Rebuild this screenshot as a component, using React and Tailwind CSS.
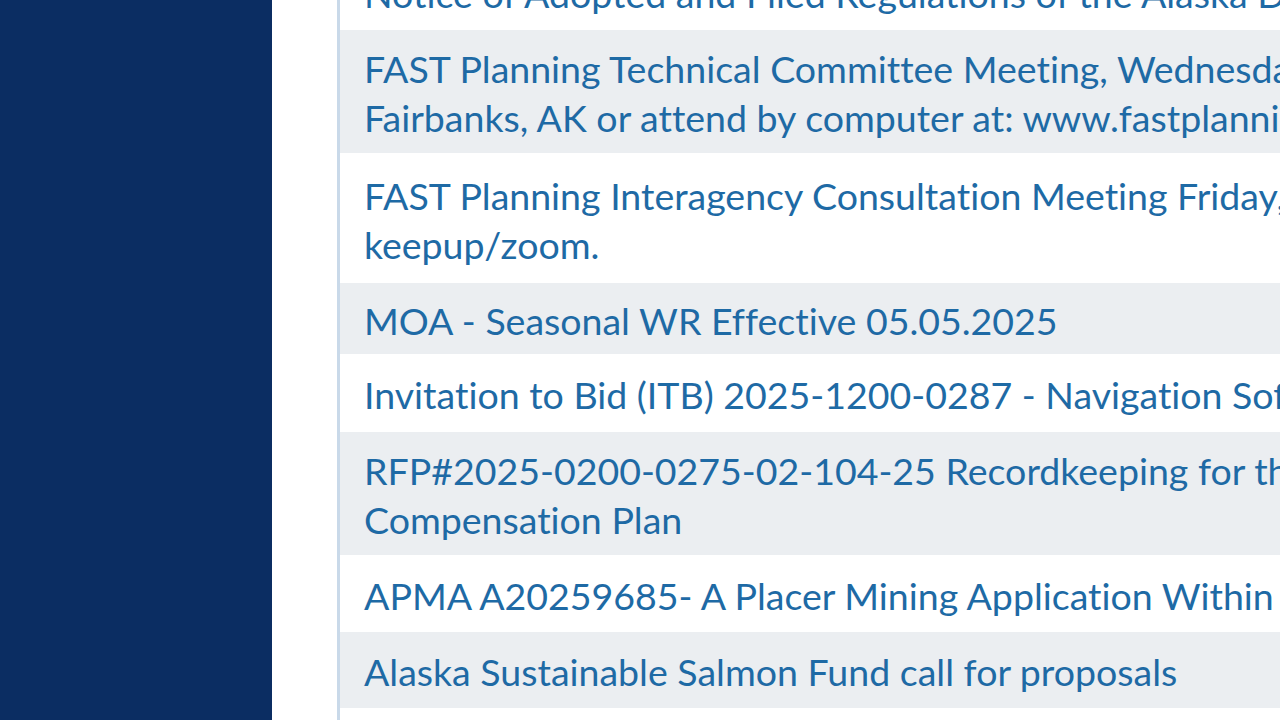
const rows = [
  { h: "h-[76px]", lines: ["Notice of Adopted and Filed Regulations of the Alaska Department of Fish and Game"] },
  {
    h: "h-[123px]",
    lines: [
      "FAST Planning Technical Committee Meeting, Wednesday, May 7, 2025, 10:00 a.m.",
      "Fairbanks, AK or attend by computer at: www.fastplanning.us/keepup/zoom",
    ],
  },
  {
    h: "h-[130px]",
    lines: ["FAST Planning Interagency Consultation Meeting Friday, May 9, 2025, at 10:00 a.m.", "keepup/zoom."],
  },
  { h: "h-[71px]", lines: ["MOA - Seasonal WR Effective 05.05.2025"] },
  { h: "h-[78px]", lines: ["Invitation to Bid (ITB) 2025-1200-0287 - Navigation Software and Services"] },
  {
    h: "h-[123px]",
    lines: ["RFP#2025-0200-0275-02-104-25 Recordkeeping for the State of Alaska Deferred", "Compensation Plan"],
  },
  { h: "h-[77px]", lines: ["APMA A20259685- A Placer Mining Application Within the Fortymile Mining District"] },
  { h: "h-[76px]", lines: ["Alaska Sustainable Salmon Fund call for proposals"] },
  { h: "h-[76px]", lines: ["Notice of Proposed Changes to the Regulations"] },
];

export default function App() {
  return (
    <div
      className="flex h-[720px] w-[1280px] overflow-hidden bg-white"
      style={{ fontFamily: "Lato, 'Open Sans', sans-serif", fontVariantLigatures: "none", fontFeatureSettings: '"liga" 0, "clig" 0' }}
    >
      <aside className="h-full w-[272px] shrink-0 bg-[#0b2d62]" />
      <main className="min-w-0 flex-1 overflow-hidden pl-[65px]">
        <div className="-mt-[46px] border-l-[3px] border-[#c9d9e9]">
          {rows.map((row, i) => (
            <div
              key={i}
              className={`${row.h} flex flex-col justify-center whitespace-nowrap pl-[24px] pt-[3px] text-[37.5px] leading-[49px] text-[#1e6aa5] ${
                i % 2 === 1 ? "bg-[#ebeef1]" : "bg-white"
              }`}
            >
              {row.lines.map((l, j) => (
                <div key={j}>
                  <a href="#">{l}</a>
                </div>
              ))}
            </div>
          ))}
        </div>
      </main>
    </div>
  );
}
